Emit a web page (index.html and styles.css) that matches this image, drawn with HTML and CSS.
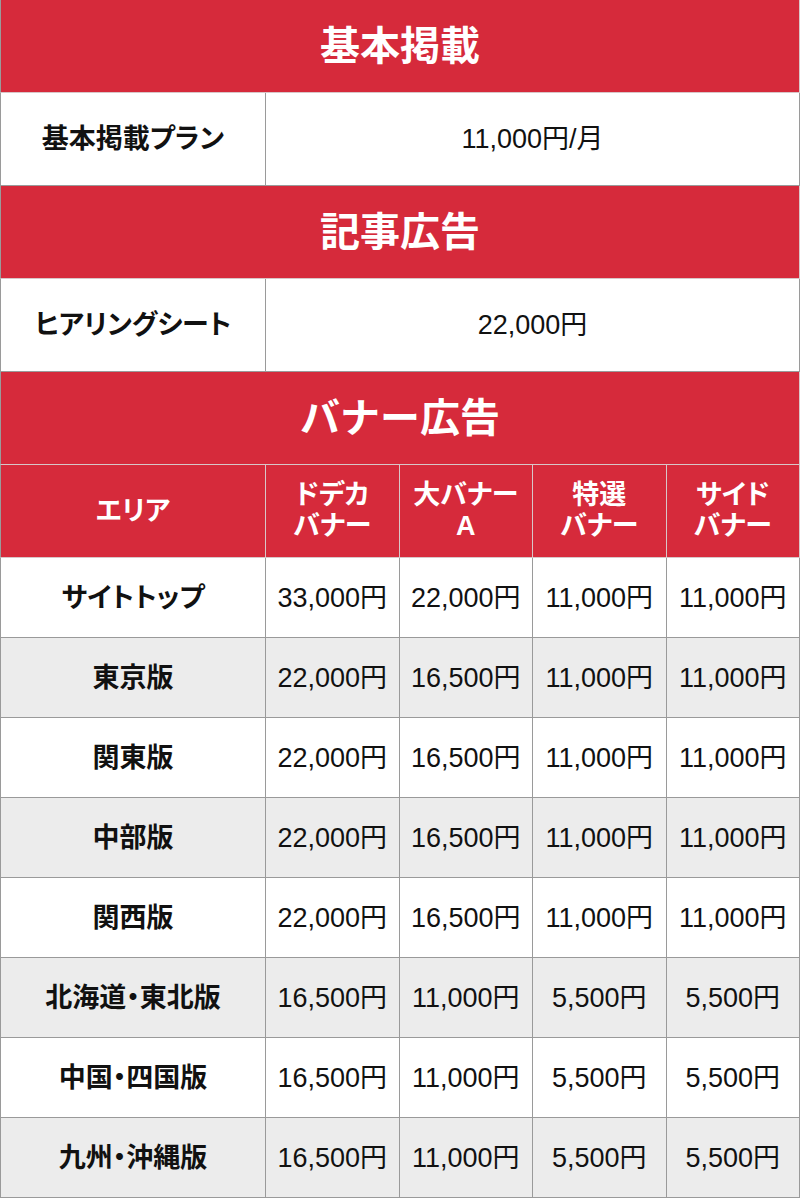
FILE: index.html
```html
<!DOCTYPE html>
<html lang="ja">
<head>
<meta charset="utf-8">
<title>料金表</title>
<link rel="stylesheet" href="styles.css">
</head>
<body>
<table class="price">
  <colgroup>
    <col class="c-area">
    <col class="c-val"><col class="c-val"><col class="c-val"><col class="c-val">
  </colgroup>
  <tbody>
    <tr class="sec"><th colspan="5">基本掲載</th></tr>
    <tr class="info"><th>基本掲載プラン</th><td colspan="4">11,000円/月</td></tr>
    <tr class="sec"><th colspan="5">記事広告</th></tr>
    <tr class="info"><th>ヒアリングシート</th><td colspan="4">22,000円</td></tr>
    <tr class="sec"><th colspan="5">バナー広告</th></tr>
    <tr class="colhead"><th>エリア</th><th>ドデカ<br>バナー</th><th>大バナー<br>A</th><th>特選<br>バナー</th><th>サイド<br>バナー</th></tr>
    <tr class="row"><th>サイトトップ</th><td>33,000円</td><td>22,000円</td><td>11,000円</td><td>11,000円</td></tr>
    <tr class="row alt"><th>東京版</th><td>22,000円</td><td>16,500円</td><td>11,000円</td><td>11,000円</td></tr>
    <tr class="row"><th>関東版</th><td>22,000円</td><td>16,500円</td><td>11,000円</td><td>11,000円</td></tr>
    <tr class="row alt"><th>中部版</th><td>22,000円</td><td>16,500円</td><td>11,000円</td><td>11,000円</td></tr>
    <tr class="row"><th>関西版</th><td>22,000円</td><td>16,500円</td><td>11,000円</td><td>11,000円</td></tr>
    <tr class="row alt"><th>北海道・東北版</th><td>16,500円</td><td>11,000円</td><td>5,500円</td><td>5,500円</td></tr>
    <tr class="row"><th>中国・四国版</th><td>16,500円</td><td>11,000円</td><td>5,500円</td><td>5,500円</td></tr>
    <tr class="row alt"><th>九州・沖縄版</th><td>16,500円</td><td>11,000円</td><td>5,500円</td><td>5,500円</td></tr>
  </tbody>
</table>
</body>
</html>
```

FILE: styles.css
```css
html, body {
  margin: 0;
  padding: 0;
  background: #ffffff;
}

body {
  font-family: "Liberation Sans", "Noto Sans CJK JP", sans-serif;
  color: #111111;
}

.price {
  width: 800px;
  table-layout: fixed;
  border-collapse: separate;
  border-spacing: 0;
}

.c-area { width: 266px; }
.c-val { width: 133.5px; }

.price th,
.price td {
  padding: 0;
  text-align: center;
  vertical-align: middle;
  border-right: 1px solid #9a9a9a;
  border-bottom: 1px solid #9a9a9a;
  line-height: 34px;
}

.price th {
  font-feature-settings: "palt" 1;
}

.price tr > :first-child {
  border-left: 1px solid #9a9a9a;
}

.sec th {
  height: 92px;
  background: #d62a3b;
  color: #ffffff;
  font-size: 40px;
  font-weight: 700;
  line-height: 40px;
  border-color: #d8c6c8;
  font-feature-settings: normal;
}

.info th,
.info td {
  height: 92px;
  background: #ffffff;
}

.info th {
  font-size: 27px;
  font-weight: 700;
}

.info td {
  font-size: 27px;
  font-weight: 400;
}

.colhead th {
  height: 92px;
  background: #d62a3b;
  color: #ffffff;
  font-size: 27px;
  font-weight: 700;
  line-height: 31px;
  border-color: #d8c6c8;
}

.row th,
.row td {
  height: 79px;
  background: #ffffff;
}

.row.alt th,
.row.alt td {
  background: #ececec;
}

.row th {
  font-size: 27px;
  font-weight: 700;
}

.row td {
  font-size: 27px;
  font-weight: 400;
}
```
